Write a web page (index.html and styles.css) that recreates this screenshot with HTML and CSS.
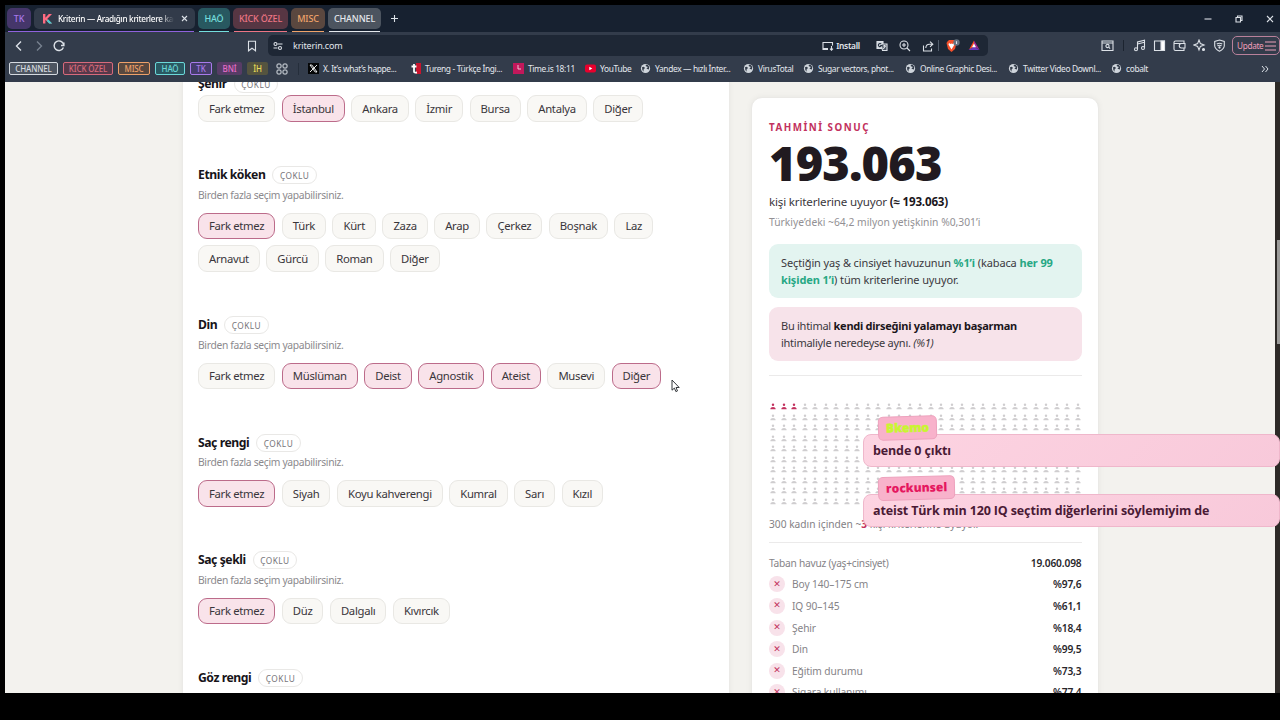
FILE: index.html
```
<!DOCTYPE html>
<html lang="tr">

<head>
    <meta charset="UTF-8">
    <title>Kriterin — Aradığın kriterlere kaç kişi uyuyor?</title>
    <link rel="stylesheet" href="styles.css">
</head>

<body>
    <svg width="0" height="0" class="sprite">
        <symbol id="globe" viewBox="0 0 12 12">
            <circle cx="6" cy="6" r="5" fill="#cfd5dc" />
            <path d="M2.2 4.6 Q4 3.6 5 4.6 T3.8 7.4 L4 9.6 Q2 8 2.2 4.6 M6.2 1.8 L6.4 3.6 L8.6 4.4 L7 6.2 L9.8 7.2 L10 4 L8.4 2z" fill="#333c4a" />
        </symbol>
        <symbol id="person" viewBox="0 0 6 7">
            <circle cx="3" cy="1.7" r="1.2" />
            <path d="M.4 6.2 V5.6 Q.6 4.1 3 4 Q5.4 4.1 5.6 5.6 V6.2z" />
        </symbol>
    </svg>

    <div class="window">
        <div class="tabs">
            <div class="tab group mor">TK</div>
            <div class="tab active">
                <svg width="11" height="11" viewBox="0 0 11 11"><path d="M1 1h2.4v3.7L6.8 1H10L5.2 6 10 10.500H7.200L3.400 6.800V10.500H1z" fill="#ff6b81" /><path d="M6 6.200L10.200 10.500H7.200L4.800 8z" fill="#45cfd0" /></svg>
                <span class="titulo">Kriterin — Aradığın kriterlere kaç</span>
                <svg class="close" width="7" height="7" viewBox="0 0 7 7"><path d="M1 1l5 5M6 1L1 6" /></svg>
            </div>
            <div class="tab group turkuaz">HAÖ</div>
            <div class="tab group kirmizi">KİCK ÖZEL</div>
            <div class="tab group turuncu">MISC</div>
            <div class="tab group gri">CHANNEL</div>
            <svg class="plus" width="9" height="9" viewBox="0 0 9 9"><path d="M4.500 1v7M1 4.500h7" /></svg>
            <div class="controls">
                <svg width="10" height="10" viewBox="0 0 10 10"><path d="M1.500 5h7" /></svg>
                <svg width="10" height="10" viewBox="0 0 10 10"><path d="M2 3.500h4.500V8H2zM3.500 3.200V2H8v4.500H6.800" /></svg>
                <svg width="10" height="10" viewBox="0 0 10 10"><path d="M2 2l6 6M8 2L2 8" /></svg>
            </div>
        </div>

        <div class="toolbar">
            <div class="nav">
                <svg width="12" height="12" viewBox="0 0 12 12"><path d="M8 1.500L3.500 6 8 10.500" /></svg>
                <svg class="dim" width="12" height="12" viewBox="0 0 12 12"><path d="M4 1.500L8.500 6 4 10.500" /></svg>
                <svg width="12" height="12" viewBox="0 0 12 12"><path d="M10.400 7.500A4.800 4.800 0 1 1 10.600 4.500M10.900 2.500V5.500H8" /></svg>
            </div>
            <svg class="save" width="10" height="12" viewBox="0 0 10 12"><path d="M1.500 1.300h7v9.500L5 8.200 1.500 10.800z" /></svg>
            <div class="address">
                <svg width="10" height="10" viewBox="0 0 10 10"><path d="M4.500 3H9.500M.5 7h4" /><circle cx="2.500" cy="3" r="1.500" /><circle cx="7" cy="7" r="1.500" /></svg>
                <span class="url">kriterin.com</span>
                <div class="install">
                    <svg width="12" height="10" viewBox="0 0 12 10"><path d="M6 7.500H1V1.500h9.500v3M1 7.500v1h5M9.500 5v4M8 7.600l1.500 1.500L11 7.600" /></svg>
                    <b>Install</b>
                </div>
                <svg width="12" height="12" viewBox="0 0 12 12"><path d="M1 1.500h6v7H1z" fill="#cfd5dc" /><path d="M5 4h6v6.500H6.500z" fill="#47515f" /><path d="M7 6h3M8.500 5v1M7.200 9l2.300-3" /><path d="M5.200 4A1.600 1.600 0 1 0 5.500 5.600H4.200" stroke="#253040" /></svg>
                <svg width="12" height="12" viewBox="0 0 12 12"><circle cx="5" cy="5" r="4" /><path d="M8 8l3 3M3 5h4M5 3v4" /></svg>
                <svg width="12" height="12" viewBox="0 0 12 12"><path d="M1.500 5.500v5.500h8V8.500M3.800 8Q4 4.200 7.500 4.200H10.500M8 1.600l2.800 2.600L8 6.800" /></svg>
                <i class="line"></i>
                <svg width="15" height="14" viewBox="0 0 15 14"><path d="M2.500 2.500L4 1h5l1.500 1.500 1 1.500-1.500 6L6.500 13 3 10 1.500 4z" fill="#f4502b" stroke="none" /><path d="M4 4l1.500 1L6.500 4.500 7.500 5 9 4 9.500 5.500 8 8 6.500 10.500 5 8 3.500 5.500z" fill="#fff" stroke="none" /><circle cx="11.500" cy="3.500" r="3.200" fill="#66717f" stroke="none" /><path d="M11.500 2.200v2.800" /></svg>
                <svg class="bat" width="12" height="11" viewBox="0 0 12 11"><path d="M6 .5L1 9.800 6 6.500z" fill="#ff4c22" stroke="none" /><path d="M6 .5L11.500 9.800 6 6.500z" fill="#a22a92" stroke="none" /><path d="M.5 10h11L6 6.500z" fill="#6b36bd" stroke="none" /><path d="M6 3.500L8 7.300H4z" fill="#fff" stroke="none" /></svg>
            </div>
            <div class="extras">
                <svg width="13" height="13" viewBox="0 0 13 13"><path d="M1 2h11v9.500H1zM1 4h11" /><circle cx="6.500" cy="7" r="1.600" /><path d="M7.700 8.200l1.400 1.400" /></svg>
                <i class="line"></i>
                <svg width="13" height="13" viewBox="0 0 13 13"><path d="M4.500 10V3l7-1.700v7.500M4.500 5l7-1.700" /><circle cx="3" cy="10.300" r="1.500" /><circle cx="10" cy="9" r="1.500" /></svg>
                <svg width="13" height="13" viewBox="0 0 13 13"><path d="M1.500 2h10v9.500h-10z" /><path d="M8 2h3.500v9.500H8z" fill="#fff" /></svg>
                <svg width="13" height="13" viewBox="0 0 13 13"><path d="M11 4.500V2H2.500Q1 2 1 3.500V10q0 1.500 1.500 1.500H11V9M1.200 4.500H12V9H8.500a2 2 0 0 1 0-4.500" /></svg>
                <svg width="13" height="13" viewBox="0 0 13 13"><path d="M6 1l1.400 3.600L11 6 7.400 7.400 6 11 4.600 7.400 1 6l3.600-1.400z" /><circle cx="10.500" cy="10.500" r="1" fill="#dce1e7" /></svg>
                <svg width="13" height="13" viewBox="0 0 13 13"><path d="M6.500 1l4.800 1.500V7q-.3 3-4.800 5.200Q2 10 1.700 7V2.500zM3.800 5q2.700-1.600 5.400 0M4.400 6.800q2.100-1.200 4.200 0" /><circle cx="6.500" cy="8.500" r=".6" /></svg>
            </div>
            <div class="update">Update <svg width="12" height="12" viewBox="0 0 12 12"><path d="M1 2h11M1 6h11M1 10h11" /></svg></div>
        </div>

        <div class="bookmarks">
            <span class="tag gri">CHANNEL</span>
            <span class="tag kirmizi">KİCK ÖZEL</span>
            <span class="tag turuncu">MISC</span>
            <span class="tag turkuaz">HAÖ</span>
            <span class="tag mor">TK</span>
            <span class="tag pembe">BNİ</span>
            <span class="tag sari">İH</span>
            <div class="apps"><svg width="12" height="12" viewBox="0 0 12 12"><rect x="1" y="1" width="4" height="4" rx="1" /><rect x="7" y="1" width="4" height="4" rx="1" /><rect x="1" y="7" width="4" height="4" rx="1" /><rect x="7" y="7" width="4" height="4" rx="1" /></svg></div>
            <a><svg width="11" height="11" viewBox="0 0 11 11"><path d="M0 0h11v11H0z" fill="#050607" /><path d="M2 2h1.800L9 9H7.200zM9 2L2 9" fill="none" stroke="#fff" stroke-width=".9" /></svg>X. It’s what’s happe...</a>
            <a><svg width="11" height="11" viewBox="0 0 11 11"><path d="M6 0H11v11H6z" fill="#c9142e" /><path d="M4 1v7.500q0 1.500 3 1M1.500 3.500h5" fill="none" stroke="#fff" stroke-width="1.800" /></svg>Tureng - Türkçe İngi...</a>
            <a><svg width="11" height="11" viewBox="0 0 11 11"><path d="M0 0h11v11H0z" fill="#c2185b" /><path d="M5 2v4h3" fill="none" stroke="#f2c5d6" /></svg>Time.is 18:11</a>
            <a><svg width="11" height="11" viewBox="0 0 11 11"><rect y="1.500" width="11" height="8" rx="2" fill="#e8002d" /><path d="M4.300 3.700v3.600l3-1.800z" fill="#fff" /></svg>YouTube</a>
            <a><svg width="11" height="11"><use href="#globe" /></svg>Yandex — hızlı İnter...</a>
            <a><svg width="11" height="11"><use href="#globe" /></svg>VirusTotal</a>
            <a><svg width="11" height="11"><use href="#globe" /></svg>Sugar vectors, phot...</a>
            <a><svg width="11" height="11"><use href="#globe" /></svg>Online Graphic Desi...</a>
            <a><svg width="11" height="11"><use href="#globe" /></svg>Twitter Video Downl...</a>
            <a><svg width="11" height="11"><use href="#globe" /></svg>cobalt</a>
            <svg class="more" width="8" height="8" viewBox="0 0 8 8"><path d="M1 1l2.500 3L1 7M4.500 1L7 4 4.500 7" /></svg>
        </div>

        <div class="page">
            <div class="form">
                <section>
                    <h3>Şehir <span>ÇOKLU</span></h3>
                    <div class="chips sehir"><button>Fark etmez</button><button class="on">İstanbul</button><button>Ankara</button><button>İzmir</button><button>Bursa</button><button>Antalya</button><button>Diğer</button></div>
                </section>
                <section>
                    <h3>Etnik köken <span>ÇOKLU</span></h3>
                    <p>Birden fazla seçim yapabilirsiniz.</p>
                    <div class="chips"><button class="on">Fark etmez</button><button>Türk</button><button>Kürt</button><button>Zaza</button><button>Arap</button><button>Çerkez</button><button>Boşnak</button><button>Laz</button><button>Arnavut</button><button>Gürcü</button><button>Roman</button><button>Diğer</button></div>
                </section>
                <section>
                    <h3>Din <span>ÇOKLU</span></h3>
                    <p>Birden fazla seçim yapabilirsiniz.</p>
                    <div class="chips"><button>Fark etmez</button><button class="on">Müslüman</button><button class="on">Deist</button><button class="on">Agnostik</button><button class="on">Ateist</button><button>Musevi</button><button class="on">Diğer</button></div>
                </section>
                <section>
                    <h3>Saç rengi <span>ÇOKLU</span></h3>
                    <p>Birden fazla seçim yapabilirsiniz.</p>
                    <div class="chips"><button class="on">Fark etmez</button><button>Siyah</button><button>Koyu kahverengi</button><button>Kumral</button><button>Sarı</button><button>Kızıl</button></div>
                </section>
                <section>
                    <h3>Saç şekli <span>ÇOKLU</span></h3>
                    <p>Birden fazla seçim yapabilirsiniz.</p>
                    <div class="chips"><button class="on">Fark etmez</button><button>Düz</button><button>Dalgalı</button><button>Kıvırcık</button></div>
                </section>
                <section>
                    <h3>Göz rengi <span>ÇOKLU</span></h3>
                </section>
            </div>

            <div class="result">
                <div class="label">TAHMİNİ SONUÇ</div>
                <div class="total">193.063</div>
                <div class="match">kişi kriterlerine uyuyor <b>(≈ 193.063)</b></div>
                <div class="share">Türkiye’deki ~64,2 milyon yetişkinin %0,301’i</div>
                <div class="box green">Seçtiğin yaş &amp; cinsiyet havuzunun <b>%1’i</b> (kabaca <b>her 99<br>kişiden 1’i</b>) tüm kriterlerine uyuyor.</div>
                <div class="box pink">Bu ihtimal <b>kendi dirseğini yalamayı başarman</b><br>ihtimaliyle neredeyse aynı. <i>(%1)</i></div>
                <hr>
                <div class="people" id="people"></div>
                <div class="caption">300 kadın içinden ~<b>3</b> kişi kriterlerine uyuyor.</div>
                <hr>
                <div class="row base"><span>Taban havuz (yaş+cinsiyet)</span><b>19.060.098</b></div>
                <div id="rows"></div>
            </div>
            <div class="scroll"><i></i></div>
        </div>
    </div>

    <div class="chat">
        <div class="msg"><span class="user lime">Bkemo</span>bende 0 çıktı</div>
        <div class="msg"><span class="user">rockunsel</span>ateist Türk min 120 IQ seçtim diğerlerini söylemiyim de</div>
    </div>
    <svg class="cursor" width="9" height="14" viewBox="0 0 9 14"><path d="M1 1v10.200l2.400-2.100 1.500 3.500 1.600-.7L5 8.500h3.200z" /></svg>

    <script>
        const people = document.getElementById('people');
        for (let i = 0; i < 300; i++) {
            people.innerHTML += `<svg class="${i < 3 ? 'hit' : ''}" width="6" height="7"><use href="#person"/></svg>`;
        }

        const filtros = [
            ['Boy 140–175 cm', '%97,6'],
            ['IQ 90–145', '%61,1'],
            ['Şehir', '%18,4'],
            ['Din', '%99,5'],
            ['Eğitim durumu', '%73,3'],
            ['Sigara kullanımı', '%77,4']
        ];
        const rows = document.getElementById('rows');
        filtros.forEach(([nombre, valor]) => {
            rows.innerHTML += `<div class="row"><button>✕</button><span>${nombre}</span><b>${valor}</b></div>`;
        });
    </script>
</body>

</html>
```
FILE: styles.css
```
* {
    box-sizing: border-box;
}

body {
    margin: 0;
    height: 720px;
    overflow: hidden;
    background: #000;
    font-family: "Noto Sans", sans-serif;
    padding: 5px 0 27px 5px;
}

svg {
    flex-shrink: 0;
}

.sprite {
    position: absolute;
}

.window {
    height: 688px;
    display: flex;
    flex-direction: column;
    overflow: hidden;
}

/* pestañas */
.tabs {
    height: 27px;
    flex-shrink: 0;
    display: flex;
    align-items: flex-start;
    gap: 3px;
    padding: 3px 5px 0 2px;
    background: #172130;
    color: #fff;
}

.tab {
    position: relative;
    height: 21px;
    border-radius: 5px;
    display: flex;
    align-items: center;
    justify-content: center;
    font-size: 9px;
    font-weight: 500;
    letter-spacing: -0.15px;
}

.tab::after {
    content: "";
    position: absolute;
    left: 1px;
    right: 1px;
    bottom: -3px;
    height: 1px;
    background: currentColor;
}

.tab.mor { width: 24px; background: #45366a; color: #a878ea; }
.tab.turkuaz { width: 32px; background: #285860; color: #74dedd; }
.tab.kirmizi { width: 55px; background: #573643; color: #ec7584; }
.tab.turuncu { width: 34px; background: #5a473f; color: #f0a46a; }
.tab.gri { width: 53px; background: #4c545f; color: #e4e8ec; }

.tab.active {
    width: 161px;
    background: #323b4a;
    justify-content: flex-start;
    padding: 0 7px 0 8px;
    font-size: 8.2px;
    letter-spacing: -0.3px;
}

.tab.active::after {
    background: #8f62dc;
    left: -26px;
}

.titulo {
    width: 116px;
    margin-left: 5px;
    overflow: hidden;
    white-space: nowrap;
    -webkit-mask-image: linear-gradient(90deg, #000 88%, transparent);
}

.close {
    margin-left: auto;
}

.tabs svg,
.toolbar svg {
    fill: none;
    stroke: #dce1e7;
    stroke-width: 1.1;
}

.tab.active svg:first-child {
    stroke: none;
}

.plus {
    margin: 6px 0 0 6px;
}

.controls {
    margin: 6px 0 0 auto;
    display: flex;
    gap: 21px;
}

/* barra de direcciones */
.toolbar {
    height: 27px;
    flex-shrink: 0;
    display: flex;
    align-items: center;
    background: #333c4b;
    color: #e2e6ec;
    font-size: 9px;
    padding-left: 8px;
}

.nav {
    display: flex;
    gap: 8px;
    width: 234px;
}

.nav svg {
    stroke-width: 1.4;
}

.nav .dim {
    stroke: #788290;
}

.save {
    margin-right: 11px;
}

.address {
    height: 21px;
    width: 720px;
    display: flex;
    align-items: center;
    padding: 0 8px 0 5px;
    border-radius: 5px;
    background: #1e2735;
    gap: 11px;
}

.address .url {
    margin-left: -1px;
    font-size: 9px;
    letter-spacing: -0.15px;
}

.install {
    margin: 0 5px 0 auto;
    display: flex;
    align-items: center;
    gap: 2px;
    font-size: 8.4px;
}

.install b {
    font-weight: 600;
    letter-spacing: -0.25px;
}

.line {
    width: 1px;
    height: 11px;
    background: #515c6b;
}

.address .line {
    margin: 0 -5px 0 -7px;
}

.bat {
    margin-left: -3px;
}

.extras {
    margin-left: auto;
    display: flex;
    align-items: center;
    gap: 7px;
    margin-right: 6px;
}

.extras .line {
    margin: 0 2px;
    background: #1c2430;
}

.update {
    width: 48px;
    height: 19px;
    flex-shrink: 0;
    display: flex;
    align-items: center;
    gap: 1px;
    padding-left: 4px;
    border: 1px solid #b9819b;
    border-radius: 5px;
    color: #ee9fba;
    font-size: 8.2px;
    letter-spacing: -0.3px;
}

.update svg {
    stroke: #ee9fba;
}

/* marcadores */
.bookmarks {
    height: 23px;
    flex-shrink: 0;
    display: grid;
    grid-template-columns: 54px 55px 37px 35px 27px 30px 29px 32px
        102px 103px 72px 55px 103px 60px 102px 103px 103px 80px 1fr;
    align-items: center;
    padding: 0 4px 4px;
    background: #333c4b;
    color: #e4e8ee;
    font-size: 8.4px;
    white-space: nowrap;
}

.bookmarks a {
    display: flex;
    align-items: center;
    gap: 4px;
    letter-spacing: -0.35px;
}

.tag {
    height: 13px;
    line-height: 11px;
    margin-right: 5px;
    border: 1px solid currentColor;
    border-radius: 2px;
    text-align: center;
    font-size: 8px;
    font-weight: 500;
    letter-spacing: -0.15px;
}

.tag.gri { background: #4d5561; color: #d4d9df; }
.tag.kirmizi { background: #56394a; color: #d66a7c; }
.tag.turuncu { background: #58483f; color: #eda069; }
.tag.turkuaz { background: #2a5962; color: #6bd8d8; }
.tag.mor { background: #453d6b; color: #a87aea; }
.tag.pembe { background: #573c66; color: #e66cc6; border: 0; line-height: 13px; }
.tag.sari { background: #55543f; color: #e5da58; border: 0; line-height: 13px; margin-right: 8px; }

.apps {
    height: 12px;
    width: 23px;
    border-right: 1px solid #252e3b;
    fill: none;
    stroke: #dce1e7;
}

.apps svg {
    display: block;
}

.more {
    justify-self: end;
    margin-right: 7px;
    fill: none;
    stroke: #dce1e7;
}

/* página */
.page {
    flex: 1;
    min-height: 0;
    position: relative;
    display: flex;
    align-items: flex-start;
    overflow: hidden;
    background: #f3f2ee;
    padding-left: 177px;
}

.form {
    width: 548px;
    height: 612px;
    flex-shrink: 0;
    padding: 0 15px;
    background: #fff;
    border: 1px solid #ebeae7;
    border-width: 0 1px;
    box-shadow: 0 0 5px rgba(0, 0, 0, 0.05);
}

section {
    margin-bottom: 44px;
}

section:first-child {
    margin-top: -8px;
}

h3 {
    height: 18px;
    margin: 0;
    display: flex;
    align-items: center;
    gap: 7px;
    font-size: 12.2px;
    font-weight: 700;
    letter-spacing: -0.45px;
    color: #171419;
}

h3 span {
    height: 18px;
    line-height: 17px;
    margin-top: 1px;
    padding: 0 6.5px;
    border: 1px solid #e9e8e6;
    border-radius: 9px;
    font-size: 8.3px;
    font-weight: 400;
    letter-spacing: 0.5px;
    color: #77757a;
}

.form p {
    margin: 3px 0 10px;
    height: 16px;
    line-height: 16px;
    font-size: 10.3px;
    letter-spacing: -0.32px;
    color: #8b898d;
}

.chips {
    display: flex;
    flex-wrap: wrap;
    gap: 6px 6.5px;
}

.sehir {
    margin-top: 3px;
}

.chips button {
    height: 26.5px;
    padding: 0 10px;
    border: 1px solid #e9e8e4;
    border-radius: 9px;
    background: #f9f8f5;
    font-family: inherit;
    font-size: 11.3px;
    letter-spacing: -0.31px;
    color: #39363b;
}

.chips .on {
    border-color: #bc6b8a;
    background: #f9e3ea;
}

.result {
    width: 347.5px;
    height: 620px;
    flex-shrink: 0;
    margin: 15px 0 0 21px;
    padding: 22px 16px 22px 17px;
    background: #fff;
    border: 1px solid #eae9e6;
    border-radius: 11px;
    box-shadow: 0 0 6px rgba(0, 0, 0, 0.05);
    color: #3b383d;
    white-space: nowrap;
}

.label {
    height: 16px;
    line-height: 16px;
    font-size: 9.8px;
    font-weight: 700;
    letter-spacing: 1.5px;
    color: #c2315e;
}

.total {
    height: 54px;
    line-height: 54px;
    font-size: 47px;
    font-weight: 900;
    letter-spacing: -0.9px;
    color: #211a20;
}

.match {
    height: 22px;
    line-height: 23px;
    font-size: 11.6px;
    letter-spacing: -0.18px;
}

.match b,
.pink b {
    color: #1b161b;
}

.share {
    height: 20px;
    line-height: 20px;
    font-size: 10.3px;
    color: #929094;
}

.box {
    height: 54px;
    margin-top: 12px;
    padding: 11px 12px;
    border-radius: 9px;
    line-height: 16.5px;
    font-size: 11px;
    letter-spacing: -0.2px;
}

.green {
    background: #e3f4f0;
    letter-spacing: -0.12px;
}

.green b {
    color: #27a884;
}

.pink {
    margin-top: 9px;
    background: #f7e3ea;
    letter-spacing: -0.26px;
}

hr {
    margin: 14px 0 0;
    border: 0;
    border-top: 1px solid #ebeaea;
}

.people {
    margin: 27px 0 0;
    padding: 0 1px;
    display: grid;
    grid-template-columns: repeat(30, 10.52px);
    grid-auto-rows: 10.5px;
}

.people svg {
    fill: #cfcdcf;
}

.people .hit {
    fill: #c2315e;
}

.caption {
    margin-top: 7px;
    height: 18px;
    line-height: 18px;
    font-size: 10.2px;
    color: #838185;
}

.caption b {
    color: #c2315e;
}

.caption + hr {
    margin: 9px 0;
}

.row {
    height: 21.6px;
    display: flex;
    align-items: center;
    font-size: 10.2px;
    letter-spacing: -0.1px;
    color: #858387;
}

.base {
    letter-spacing: -0.25px;
}

.row b {
    margin-left: auto;
    font-weight: 600;
    color: #29262b;
    letter-spacing: -0.15px;
}

.row button {
    width: 16px;
    height: 16px;
    margin-right: 7px;
    padding: 0 0 1px;
    border: 0;
    border-radius: 50%;
    background: #f8e2ea;
    color: #c2315e;
    font: bold 9px "DejaVu Sans", sans-serif;
}

.scroll {
    position: absolute;
    right: 0;
    top: 0;
    width: 5px;
    height: 612px;
    background: #2d2a27;
}

.scroll i {
    display: block;
    width: 3px;
    height: 104px;
    margin: 158px 0 0 2px;
    background: #9b9b99;
}

/* chat encima de la página */
.chat {
    position: absolute;
    left: 863px;
    top: 434px;
    width: 417px;
    display: flex;
    flex-direction: column;
    gap: 27px;
}

.msg {
    position: relative;
    height: 33px;
    line-height: 32px;
    padding-left: 9px;
    border: 1px solid #efb7cb;
    border-radius: 8px;
    background: linear-gradient(135deg, #fdd4e2, #f8c9da);
    font-family: "Open Sans", sans-serif;
    font-size: 12.5px;
    font-weight: 700;
    letter-spacing: -0.13px;
    color: #4a1a35;
}

.user {
    position: absolute;
    left: 14px;
    top: -19px;
    height: 24px;
    line-height: 22px;
    padding: 0 7px;
    border: 1px solid #eda2bd;
    border-radius: 5px;
    background: #f8b2cb;
    color: #e5175f;
    font-size: 12px;
    font-weight: 800;
    letter-spacing: 0;
    transform: rotate(-1.5deg);
}

.user.lime {
    color: #c9f531;
    -webkit-text-stroke: 0.5px #c9f531;
}

.cursor {
    position: absolute;
    left: 671px;
    top: 379px;
    fill: #fff;
    stroke: #33363a;
}
```
